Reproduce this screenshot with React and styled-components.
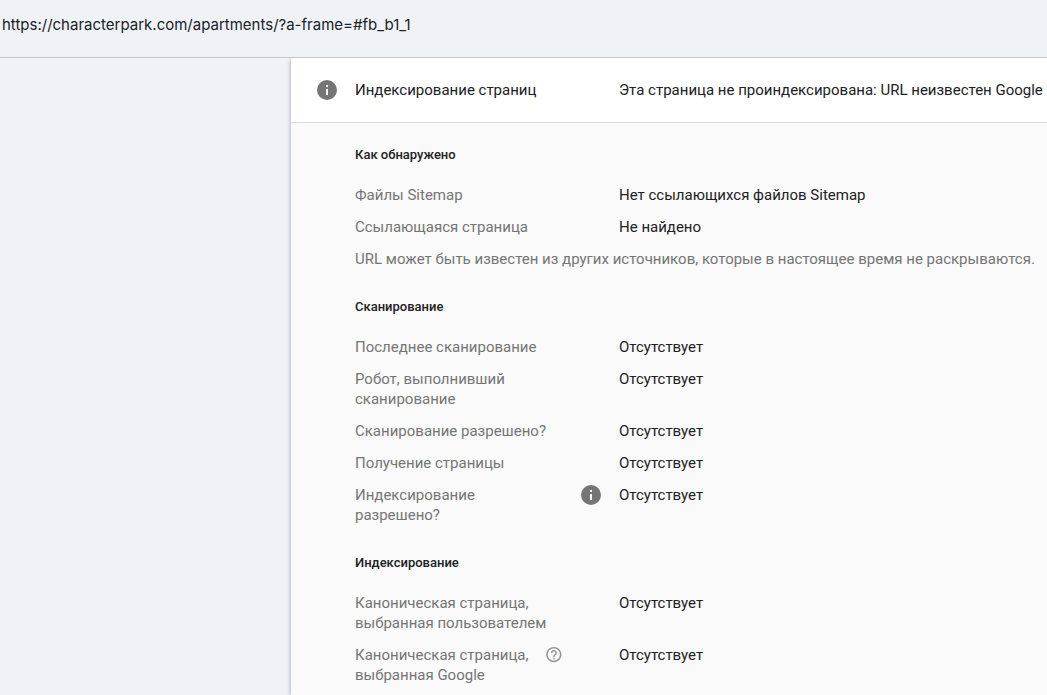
import React from "react";
import styled, { createGlobalStyle } from "styled-components";

const GlobalStyle = createGlobalStyle`
  * {
    box-sizing: border-box;
  }
  body {
    margin: 0;
    background-color: #eff3f8;
    color: #202124;
    font-family: Roboto, "Liberation Sans", sans-serif;
    font-size: 15px;
    line-height: 20px;
  }
`;

const Page = styled.div`
  display: flex;
  flex-direction: column;
  min-height: 100vh;
`;

const UrlBar = styled.header`
  padding: 15px 2px 22px;
  border-bottom: 1px solid #c4c7c9;
  font-family: Inter, Roboto, sans-serif;
`;

const Content = styled.div`
  display: flex;
  flex: 1;
`;

const SidePanel = styled.aside`
  flex: 0 0 291px;
`;

const Card = styled.main`
  flex: 1;
  min-width: 0;
  background-color: #fafafa;
  border-top-left-radius: 2px;
  box-shadow: 0 1px 4px rgba(0, 0, 0, 0.35);
  clip-path: inset(0 0 0 -8px);
`;

const CardHeader = styled.div`
  display: flex;
  align-items: center;
  padding: 22px 0 22px 26px;
  background-color: #fff;
  border-bottom: 1px solid #dedede;
  border-top-left-radius: 2px;
`;

const CardTitle = styled.h1`
  flex: 0 0 264px;
  margin: 0 0 0 18px;
  font-size: 15px;
  font-weight: 400;
`;

const Status = styled.span`
  white-space: nowrap;
`;

const Details = styled.div`
  display: flex;
  flex-direction: column;
  gap: 28px;
  padding: 22px 0 0 64px;
`;

const SectionTitle = styled.h2`
  margin: 0 0 20px;
  font-size: 13px;
  font-weight: 500;
  line-height: 20px;
`;

const Rows = styled.dl`
  display: flex;
  flex-direction: column;
  gap: 12px;
  margin: 0;
`;

const Row = styled.div`
  display: grid;
  grid-template-columns: 192px 54px 1fr;
  align-items: start;
`;

const Label = styled.dt`
  color: #757575;
`;

const Hints = styled.dd`
  display: flex;
  align-items: center;
  justify-content: ${(props) => (props.$end ? "flex-end" : "flex-start")};
  height: 20px;
  margin: 0;
`;

const Value = styled.dd`
  grid-column: 3;
  margin: 0 0 0 18px;
`;

const Note = styled.p`
  margin: 12px 0 0;
  color: #757575;
`;

const Icon = styled.svg`
  display: block;
  flex: none;
`;

const InfoIcon = () => (
  <Icon width="20" height="20" viewBox="0 0 20 20" aria-hidden="true">
    <circle cx="10" cy="10" r="10" fill="#757575" />
    <path d="M9 5h2v2H9zM9 9h2v6H9z" fill="#fff" />
  </Icon>
);

const HelpIcon = () => (
  <Icon width="16" height="16" viewBox="3 2 21 21" aria-hidden="true" overflow="visible">
    <path
      fill="#949494"
      d="M11 18h2v-2h-2v2zm1-16C6.48 2 2 6.48 2 12s4.48 10 10 10 10-4.48 10-10S17.52 2 12 2zm0 18c-4.41 0-8-3.59-8-8s3.59-8 8-8 8 3.59 8 8-3.59 8-8 8zm0-14c-2.21 0-4 1.79-4 4h2c0-1.1.9-2 2-2s2 .9 2 2c0 2-3 1.75-3 5h2c0-2.25 3-2.5 3-5 0-2.21-1.79-4-4-4z"
    />
  </Icon>
);

const sections = [
  {
    title: "Как обнаружено",
    rows: [
      { label: "Файлы Sitemap", value: "Нет ссылающихся файлов Sitemap" },
      { label: "Ссылающаяся страница", value: "Не найдено" },
    ],
    note: "URL может быть известен из других источников, которые в настоящее время не раскрываются.",
  },
  {
    title: "Сканирование",
    rows: [
      { label: "Последнее сканирование", value: "Отсутствует" },
      { label: "Робот, выполнивший сканирование", value: "Отсутствует" },
      { label: "Сканирование разрешено?", value: "Отсутствует" },
      { label: "Получение страницы", value: "Отсутствует" },
      { label: "Индексирование разрешено?", value: "Отсутствует", icon: "info" },
    ],
  },
  {
    title: "Индексирование",
    rows: [
      { label: "Каноническая страница, выбранная пользователем", value: "Отсутствует" },
      { label: "Каноническая страница, выбранная Google", value: "Отсутствует", icon: "help" },
    ],
  },
];

const App = () => {
  return (
    <Page>
      <GlobalStyle />
      <UrlBar>https://characterpark.com/apartments/?a-frame=#fb_b1_1</UrlBar>
      <Content>
        <SidePanel />
        <Card>
          <CardHeader>
            <InfoIcon />
            <CardTitle>Индексирование страниц</CardTitle>
            <Status>Эта страница не проиндексирована: URL неизвестен Google</Status>
          </CardHeader>
          <Details>
            {sections.map((section) => (
              <section key={section.title}>
                <SectionTitle>{section.title}</SectionTitle>
                <Rows>
                  {section.rows.map((row) => (
                    <Row key={row.label}>
                      <Label>{row.label}</Label>
                      {row.icon && (
                        <Hints $end={row.icon === "info"}>
                          {row.icon === "info" ? <InfoIcon /> : <HelpIcon />}
                        </Hints>
                      )}
                      <Value>{row.value}</Value>
                    </Row>
                  ))}
                </Rows>
                {section.note && <Note>{section.note}</Note>}
              </section>
            ))}
          </Details>
        </Card>
      </Content>
    </Page>
  );
};

export default App;
